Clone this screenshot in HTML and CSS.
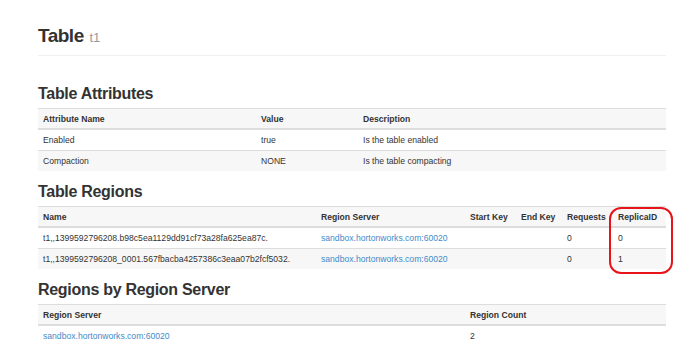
FILE: index.html
```html
<!DOCTYPE html>
<html lang="en">
<head>
    <meta charset="UTF-8">
    <title>Table t1</title>
    <link rel="stylesheet" href="styles.css">
</head>
<body>

    <div class="container">
        <div class="page-header">
            <h1>Table <small>t1</small></h1>
        </div>

        <h2>Table Attributes</h2>
        <table class="table">
            <thead>
                <tr>
                    <th class="c-attr">Attribute Name</th>
                    <th class="c-value">Value</th>
                    <th>Description</th>
                </tr>
            </thead>
            <tbody>
                <tr>
                    <td>Enabled</td>
                    <td>true</td>
                    <td>Is the table enabled</td>
                </tr>
                <tr>
                    <td>Compaction</td>
                    <td>NONE</td>
                    <td>Is the table compacting</td>
                </tr>
            </tbody>
        </table>

        <h2>Table Regions</h2>
        <div class="marked">
            <table class="table">
                <thead>
                    <tr>
                        <th class="c-name">Name</th>
                        <th class="c-server">Region Server</th>
                        <th class="c-start">Start Key</th>
                        <th class="c-end">End Key</th>
                        <th class="c-req">Requests</th>
                        <th>ReplicaID</th>
                    </tr>
                </thead>
                <tbody>
                    <tr>
                        <td>t1,,1399592796208.b98c5ea1129dd91cf73a28fa625ea87c.</td>
                        <td><a href="#">sandbox.hortonworks.com:60020</a></td>
                        <td></td>
                        <td></td>
                        <td>0</td>
                        <td>0</td>
                    </tr>
                    <tr>
                        <td>t1,,1399592796208_0001.567fbacba4257386c3eaa07b2fcf5032.</td>
                        <td><a href="#">sandbox.hortonworks.com:60020</a></td>
                        <td></td>
                        <td></td>
                        <td>0</td>
                        <td>1</td>
                    </tr>
                </tbody>
            </table>
            <div class="highlight"></div>
        </div>

        <h2>Regions by Region Server</h2>
        <table class="table">
            <thead>
                <tr>
                    <th class="c-rs">Region Server</th>
                    <th>Region Count</th>
                </tr>
            </thead>
            <tbody>
                <tr>
                    <td><a href="#">sandbox.hortonworks.com:60020</a></td>
                    <td>2</td>
                </tr>
            </tbody>
        </table>
    </div>

</body>
</html>
```

FILE: styles.css
```css
* {
    margin: 0;
    padding: 0;
    box-sizing: border-box;
}
body {
    font-family: "Liberation Sans", Arial, sans-serif;
    color: #333;
    background: #fff;
}
.container {
    width: 628px;
    margin-left: 38px;
}
.page-header {
    margin-top: 25px;
    margin-bottom: 28px;
    padding-bottom: 8px;
    border-bottom: 1px solid #f0f0f0;
}
h1 {
    font-size: 19px;
    font-weight: bold;
    line-height: 22px;
    letter-spacing: -0.5px;
}
h1 small {
    font-size: 13px;
    font-weight: normal;
    line-height: 1;
    color: #999;
    letter-spacing: 0;
    margin-left: 1px;
}
h2 {
    font-size: 16px;
    font-weight: bold;
    line-height: 20px;
    margin-top: 11px;
    margin-bottom: 4px;
    letter-spacing: -0.3px;
}
.page-header + h2 {
    margin-top: 0;
}
.table {
    width: 100%;
    border-collapse: collapse;
    font-size: 8.6px;
    line-height: 12px;
}
.table th, .table td {
    text-align: left;
    padding: 4px 5px;
    vertical-align: top;
    border-top: 1px solid #ddd;
}
.table th {
    font-weight: bold;
    padding-bottom: 3px;
    background: #f7f7f7;
    border-bottom: 2px solid #ddd;
}
.table tbody tr:nth-child(even) td {
    background: #f7f7f7;
}
.table a {
    color: #428bca;
    text-decoration: none;
}
.c-attr { width: 218px; }
.c-value { width: 102px; }
.c-name { width: 278px; }
.c-server { width: 149px; }
.c-start { width: 51px; }
.c-end { width: 46px; }
.c-req { width: 51px; }
.c-rs { width: 427px; }
.marked {
    position: relative;
}
.highlight {
    position: absolute;
    top: 1px;
    left: 571px;
    width: 64px;
    height: 67px;
    border: 2px solid #e8141a;
    border-radius: 12px;
}
```
